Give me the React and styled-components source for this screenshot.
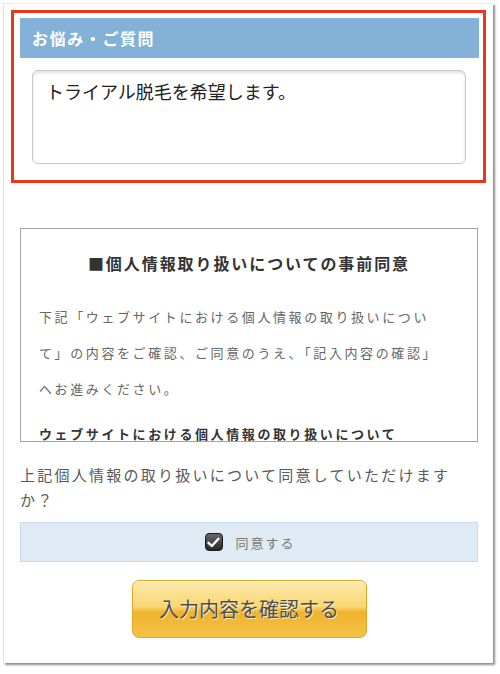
import React from 'react';
import styled, { createGlobalStyle } from 'styled-components';

const GlobalStyle = createGlobalStyle`
  html, body {
    margin: 0;
    padding: 0;
    background: #ffffff;
  }
  body {
    font-family: "Noto Sans CJK JP", "Noto Sans", sans-serif;
  }
  * {
    box-sizing: border-box;
  }
`;

const Page = styled.div`
  padding: 3px 0 0 3px;
  width: 500px;
  height: 674px;
  overflow: hidden;
`;

const Card = styled.div`
  width: 490px;
  height: 660px;
  background: #ffffff;
  border-left: 1px solid #e2e2e2;
  border-top: 1px solid #ececec;
  box-shadow: 2px 2px 2px rgba(0, 0, 0, 0.45);
  padding-top: 6px;
`;

const Highlight = styled.section`
  margin: 0 7px;
  border: 3px solid #e8361f;
  padding: 5px 4px 16px 6px;
`;

const FieldHeader = styled.div`
  height: 40px;
  background: #84b1d7;
  color: #ffffff;
  font-size: 16px;
  font-weight: 700;
  letter-spacing: 0.1em;
  display: flex;
  align-items: center;
  padding-left: 12px;
`;

const TextBox = styled.textarea`
  display: block;
  width: 434px;
  height: 94px;
  margin: 12px 0 0 12px;
  border: 1px solid #c9c9c9;
  border-radius: 6px;
  box-shadow: inset 0 2px 3px rgba(0, 0, 0, 0.12);
  padding: 9px 13px;
  font-family: "Noto Sans CJK JP", sans-serif;
  font-size: 18px;
  line-height: 1.3;
  color: #222;
  resize: none;
  outline: none;
  background: #fff;
`;

const Lower = styled.div`
  margin: 45px 15px 0 16px;
`;

const PolicyBox = styled.div`
  height: 214px;
  border: 1px solid #a3a3a3;
  overflow: hidden;
  padding: 22px 28px 0 18px;
  color: #666;
`;

const PolicyTitle = styled.h3`
  margin: 0 0 24px;
  text-align: center;
  font-size: 16px;
  line-height: 24px;
  font-weight: 700;
  letter-spacing: 0.12em;
  color: #333;
  padding-left: 10px;
`;

const PolicyText = styled.p`
  margin: 0 0 9px;
  font-size: 13px;
  line-height: 36px;
  letter-spacing: 0.2em;
  font-weight: ${({ $bold }) => ($bold ? 700 : 400)};
  color: ${({ $bold }) => ($bold ? '#333' : '#666')};
`;

const Question = styled.p`
  margin: 20px 0 0;
  font-size: 15px;
  line-height: 25px;
  letter-spacing: 0.15em;
  color: #595959;
`;

const AgreeRow = styled.label`
  margin-top: 10px;
  height: 40px;
  background: #dfeaf5;
  border: 1px solid #c7dcf0;
  display: flex;
  align-items: center;
  justify-content: center;
  gap: 13px;
  font-size: 13px;
  letter-spacing: 0.15em;
  color: #777;
  padding-left: 2px;
`;

const CheckMark = styled.span`
  width: 18px;
  height: 18px;
  border-radius: 4px;
  border: 1px solid #1a1a1a;
  background: linear-gradient(#6a6a6a, #262626);
  display: flex;
  align-items: center;
  justify-content: center;
`;

const ButtonWrap = styled.div`
  display: flex;
  justify-content: center;
  margin-top: 18px;
`;

const ConfirmButton = styled.button`
  width: 235px;
  height: 58px;
  border: 1px solid #e1a627;
  border-radius: 7px;
  background: linear-gradient(
    #fdeaad 0%,
    #f9d672 46%,
    #f0b42e 56%,
    #f4c247 100%
  );
  box-shadow: inset 0 1px 0 rgba(255, 255, 255, 0.6);
  font-family: "Noto Sans CJK JP", sans-serif;
  font-size: 20px;
  color: #4d4d4d;
  text-shadow: 1px 1px 0 rgba(255, 255, 255, 0.7);
  cursor: pointer;
  padding: 0 0 2px;
`;

const App = () => (
  <Page>
    <GlobalStyle />
    <Card>
      <Highlight>
        <FieldHeader>お悩み・ご質問</FieldHeader>
        <TextBox defaultValue="トライアル脱毛を希望します。" />
      </Highlight>
      <Lower>
        <PolicyBox>
          <PolicyTitle>■個人情報取り扱いについての事前同意</PolicyTitle>
          <PolicyText>
            下記「ウェブサイトにおける個人情報の取り扱いについて」の内容をご確認、ご同意のうえ、「記入内容の確認」へお進みください。
          </PolicyText>
          <PolicyText $bold>ウェブサイトにおける個人情報の取り扱いについて</PolicyText>
        </PolicyBox>
        <Question>上記個人情報の取り扱いについて同意していただけますか？</Question>
        <AgreeRow>
          <CheckMark>
            <svg width="13" height="11" viewBox="0 0 13 11">
              <path
                d="M1.5 5.8 L4.8 9 L11.5 1.8"
                fill="none"
                stroke="#ffffff"
                strokeWidth="2.4"
                strokeLinecap="round"
                strokeLinejoin="round"
              />
            </svg>
          </CheckMark>
          同意する
        </AgreeRow>
        <ButtonWrap>
          <ConfirmButton type="button">入力内容を確認する</ConfirmButton>
        </ButtonWrap>
      </Lower>
    </Card>
  </Page>
);

export default App;
